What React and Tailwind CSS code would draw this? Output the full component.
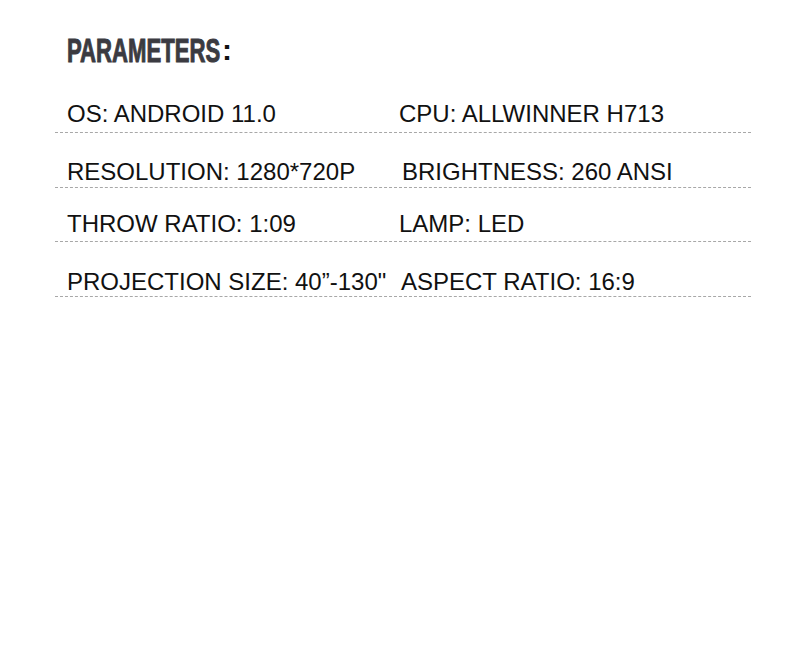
const rows = [
  { left: "OS: ANDROID 11.0", right: "CPU: ALLWINNER H713", space: "pt-[22px] pb-[6px]", rx: "pl-0" },
  { left: "RESOLUTION: 1280*720P", right: "BRIGHTNESS: 260 ANSI", space: "pt-[27px] pb-[3px]", rx: "pl-[3px]" },
  { left: "THROW RATIO: 1:09", right: "LAMP: LED", space: "pt-[24px] pb-[5px]", rx: "pl-0" },
  { left: "PROJECTION SIZE: 40\u201d-130\"", right: "ASPECT RATIO: 16:9", space: "pt-[28px] pb-[2px]", rx: "pl-[2px]" },
]

export default function App() {
  return (
    <div className="w-[800px] h-[663px] bg-white font-['Liberation_Sans',Arial,sans-serif]">
      {/* Heading */}
      <div className="h-[80px] pt-[34px] pl-[67px] flex items-baseline">
        <div className="w-[155px] shrink-0">
          <h1 className="inline-block whitespace-nowrap text-[#3b3b41] text-[33px] font-bold leading-none origin-left scale-x-[0.67] [-webkit-text-stroke:1px_#3b3b41]">
            PARAMETERS
          </h1>
        </div>
        <span className="text-[#111] text-[30px] font-bold leading-none -translate-y-[2px]">:</span>
      </div>

      {/* Spec rows */}
      <div className="ml-[55px] w-[696px]">
        {rows.map((r) => (
          <div
            key={r.left}
            className={`flex ${r.space} border-b border-dashed border-[#a8a8a8] text-[24px] leading-[24px] text-[#111]`}
          >
            <span className="w-[344px] shrink-0 pl-[12px] whitespace-nowrap">{r.left}</span>
            <span className={`${r.rx} whitespace-nowrap`}>{r.right}</span>
          </div>
        ))}
      </div>
    </div>
  )
}
